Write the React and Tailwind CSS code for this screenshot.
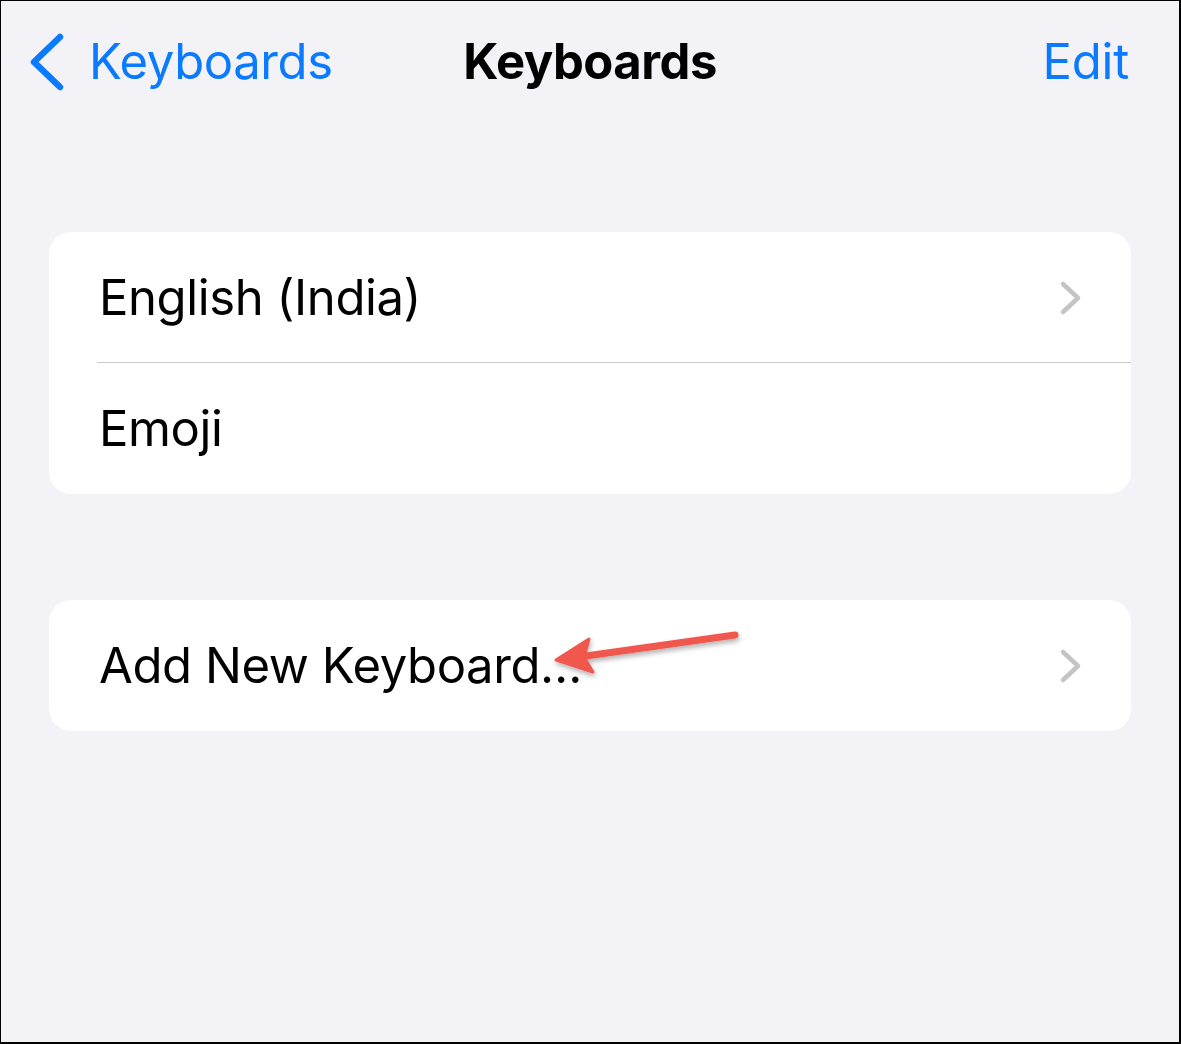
import React from 'react'

function Chevron() {
  return (
    <svg width="24" height="36" viewBox="0 0 24 36" className="shrink-0">
      <path d="M4 4 L19 18 L4 32" fill="none" stroke="#c4c4c7" strokeWidth="4.5" strokeLinecap="round" strokeLinejoin="round" />
    </svg>
  )
}

function Row({ label, chevron, divider }) {
  return (
    <div className="relative flex h-[131px] items-center justify-between pl-[50px] pr-[48px]">
      <span className="text-[49px] tracking-[-0.4px] text-black">{label}</span>
      {chevron && <Chevron />}
      {divider && <div className="absolute bottom-0 left-[48px] right-0 h-px bg-[#c8c8cc]" />}
    </div>
  )
}

export default function App() {
  return (
    <div
      className="relative h-[1044px] w-[1181px] overflow-hidden border-t border-l border-r-2 border-b-2 border-black bg-[#f2f2f7]"
      style={{ fontFamily: 'Inter, "Noto Sans", sans-serif' }}
    >
      {/* Nav bar */}
      <header className="relative flex h-[124px] items-center justify-between pl-[28px] pr-[50px] pb-[2px]">
        <div className="flex items-center gap-[24px]">
          <svg width="36" height="58" viewBox="0 0 36 58">
            <path d="M31 4 L5 29 L31 54" fill="none" stroke="#0a7aff" strokeWidth="6.5" strokeLinecap="round" strokeLinejoin="round" />
          </svg>
          <span className="text-[49px] tracking-[-0.4px] text-[#0a7aff]">Keyboards</span>
        </div>
        <h1 className="absolute left-0 right-0 top-[24px] text-center text-[49px] font-bold tracking-[-0.5px] text-black">Keyboards</h1>
        <span className="text-[49px] tracking-[-0.2px] text-[#0a7aff]">Edit</span>
      </header>

      <main className="flex flex-col gap-[106px] px-[48px] pt-[107px]">
        <section className="overflow-hidden rounded-[22px] bg-white">
          <Row label="English (India)" chevron divider />
          <Row label="Emoji" />
        </section>

        <section className="relative overflow-hidden rounded-[22px] bg-white">
          <Row label="Add New Keyboard…" chevron />
        </section>
      </main>

      {/* annotation arrow */}
      <svg className="absolute left-0 top-0" width="1181" height="1044" viewBox="0 0 1181 1044" fill="none">
        <defs>
          <filter id="sh" x="-20%" y="-50%" width="140%" height="200%">
            <feDropShadow dx="1" dy="3" stdDeviation="2.5" floodColor="#000" floodOpacity="0.3" />
          </filter>
        </defs>
        <g filter="url(#sh)">
          <path d="M734 634 L585 655" stroke="#f0584e" strokeWidth="7" strokeLinecap="round" />
          <path d="M555 659 L588 638 L583 656 L592 671 Z" fill="#f0584e" stroke="#f0584e" strokeWidth="3" strokeLinejoin="round" />
        </g>
      </svg>
    </div>
  )
}
